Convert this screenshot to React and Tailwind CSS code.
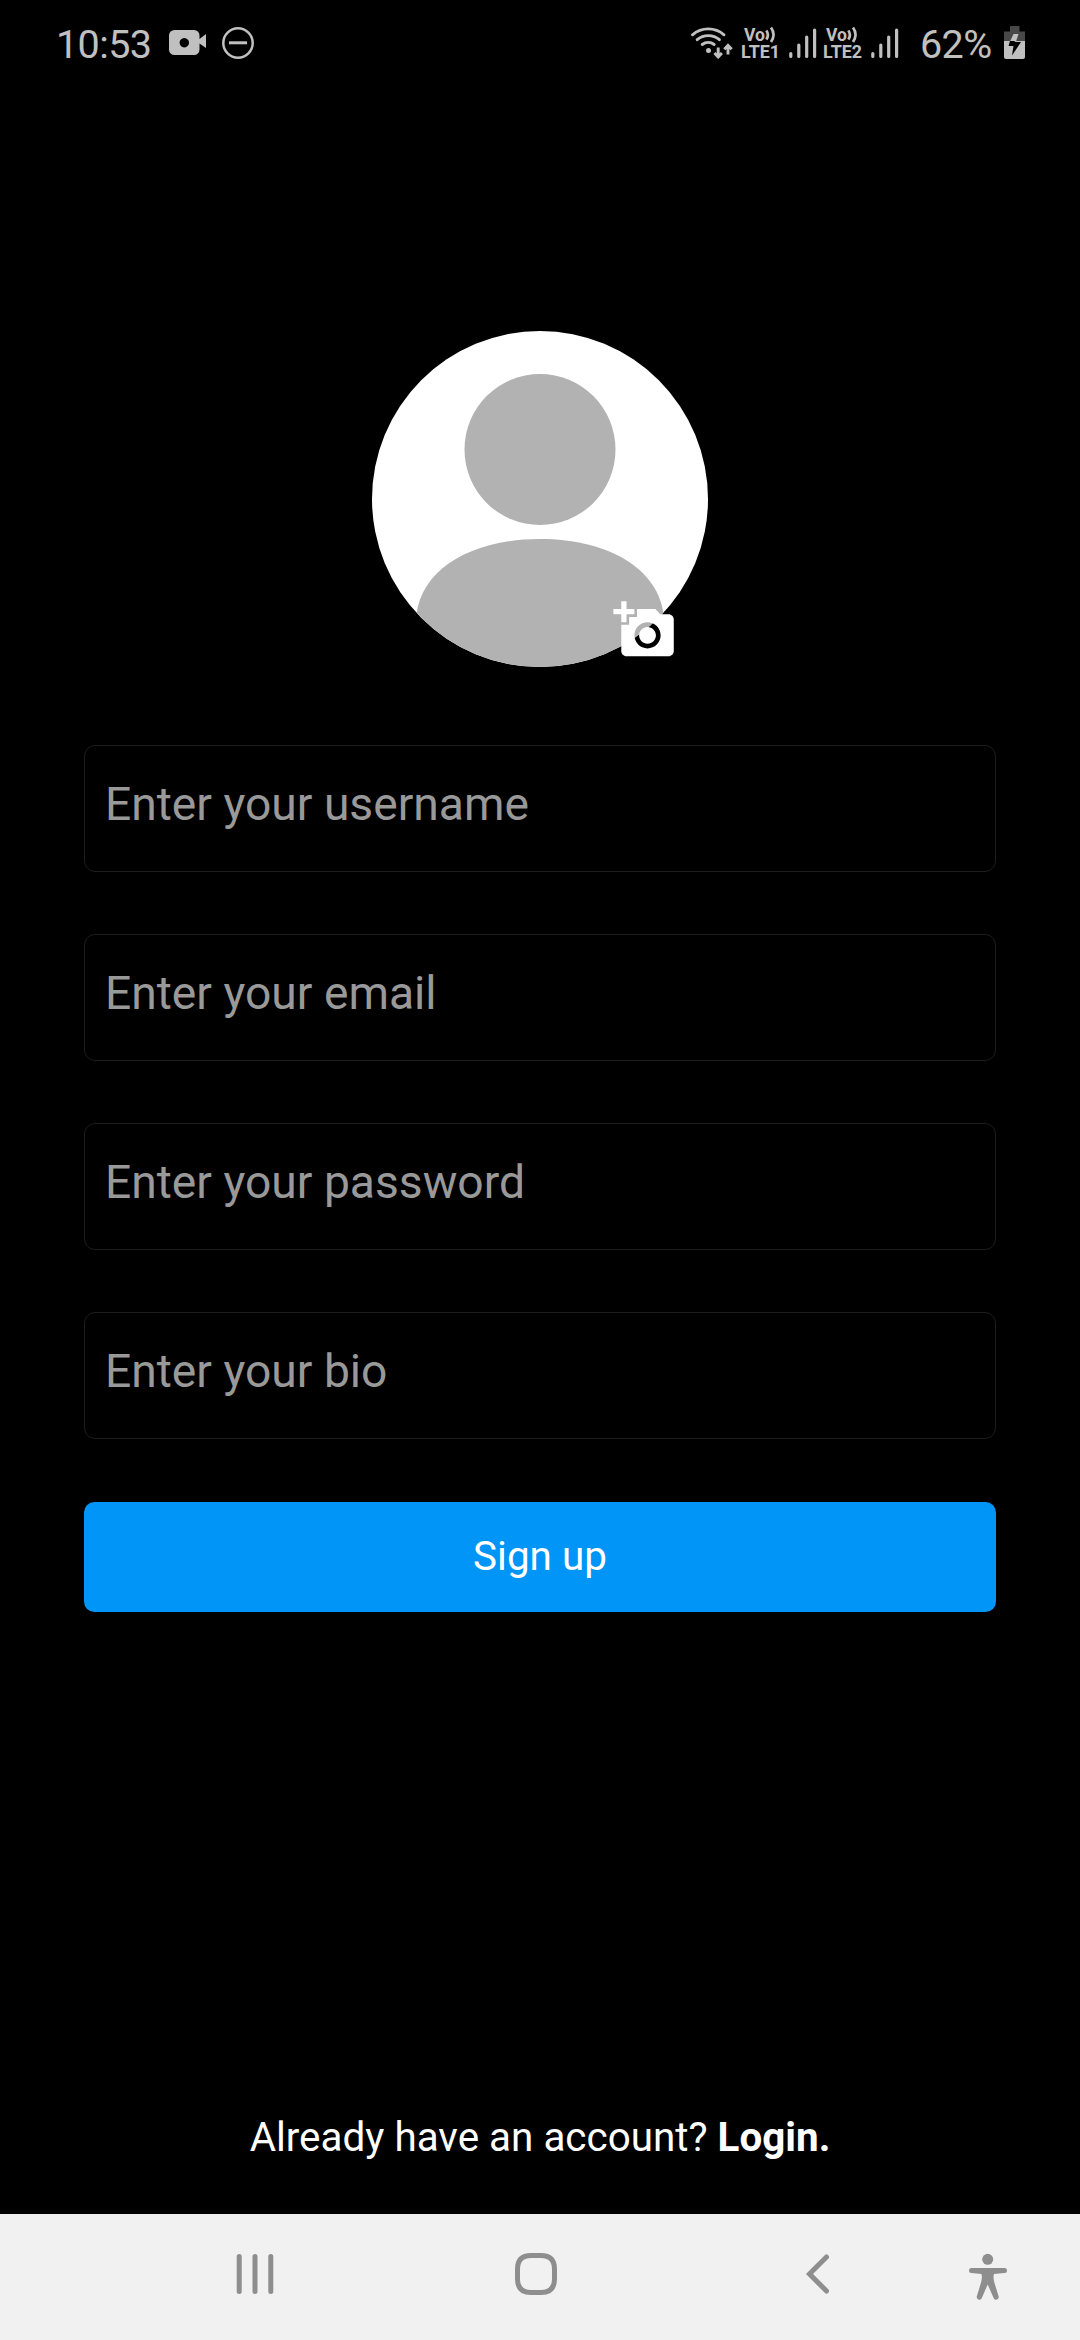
const fields = [
  "Enter your username",
  "Enter your email",
  "Enter your password",
  "Enter your bio",
];

function VideoIcon() {
  return (
    <svg className="ml-[18px] h-[32px] w-[38px]" viewBox="0 0 38 32" fill="#c0c0c0">
      <path fillRule="evenodd" d="M5.5 3h19.5a5.5 5.5 0 0 1 5.5 5.5v3.5l6.5-5v14l-6.5-4.5v6a5.500 5.500 0 0 1-5.500 5.500h-19.500a5.500 5.500 0 0 1-5.500-5.500v-14a5.500 5.500 0 0 1 5.500-5.500zM15.300 11a4.700 4.700 0 1 0 .01 0z" />
    </svg>
  );
}

function DoNotDisturbIcon() {
  return (
    <svg className="ml-[15px] h-[32px] w-[32px]" viewBox="0 0 32 32" fill="none" stroke="#c0c0c0">
      <circle cx="16" cy="16" r="14.700" strokeWidth="2.500" />
      <path d="M7 15.800h18" strokeWidth="3" />
    </svg>
  );
}

function WifiIcon() {
  return (
    <svg className="h-[32px] w-[43px]" viewBox="0 0 43 32" fill="none" stroke="#c0c0c0" strokeWidth="2.900" strokeLinecap="round">
      <path d="M2.500 7.800A24 24 0 0 1 34 7.800" />
      <path d="M7.200 12.700A17 17 0 0 1 29.400 12.700" />
      <path d="M12.200 17.500A10 10 0 0 1 24.200 17.500" />
      <circle cx="18.500" cy="23.500" r="2.500" fill="#c0c0c0" stroke="none" />
      <path d="M28.200 20.500V29.500M24.500 26l3.700 4 3.700-4M38 27.500V18.500M34.300 22.300l3.700-4 3.700 4" strokeLinecap="butt" />
    </svg>
  );
}

function VolteIcon({ label }) {
  return (
    <svg className="h-[44px] w-[46px]" viewBox="-2 -5 46 44" fill="#c0c0c0">
      <g className="font-['Roboto'] text-[18px] font-bold">
        <text x="3" y="14.800" textLength="21" lengthAdjust="spacingAndGlyphs">Vo</text>
        <text x="0" y="32" textLength="39" lengthAdjust="spacingAndGlyphs">{label}</text>
      </g>
      <path d="M25.300 4.500q3.200 4.500 0 9M30 1.500q5 7 0 14.500" fill="none" stroke="#c0c0c0" strokeWidth="2.700" />
    </svg>
  );
}

function SignalIcon() {
  return (
    <svg className="h-[32px] w-[28px]" viewBox="0 0 28 32" stroke="#c0c0c0" strokeWidth="3.200" strokeLinecap="round">
      <path d="M1.800 26.500v3M9.800 18v11.500M17.700 10v19.500M25.600 3v26.500" />
    </svg>
  );
}

function BatteryIcon() {
  return (
    <svg className="ml-[12px] h-[34px] w-[22px]" viewBox="0 0 22 34">
      <path d="M6 0h9.500v5.500h5.500v10H0v-10h6z" fill="#484848" />
      <path d="M0 15h21v16a2 2 0 0 1-2 2H2a2 2 0 0 1-2-2z" fill="#c0c0c0" />
      <path d="M9.500 8h5l-2.500 7.500H6z" fill="#c0c0c0" />
      <path d="M6 15h4.500-.3l1.300 1H17L8 29.500l1.500-9.500H4.500z" fill="#000" />
    </svg>
  );
}

function StatusBar() {
  return (
    <header className="flex h-[86px] shrink-0 items-center pl-[56px] pr-[54px] text-[39.500px] leading-none text-[#c0c0c0]">
      <span className="w-[95px] whitespace-nowrap pt-[3px] tracking-[-0.600px]">10:53</span>
      <VideoIcon />
      <DoNotDisturbIcon />
      <div className="ml-auto flex items-center">
        <WifiIcon />
        <div className="ml-[6px] flex items-center gap-[4px]">
          <VolteIcon label="LTE1" />
          <SignalIcon />
        </div>
        <div className="ml-[4px] flex items-center gap-[4px]">
          <VolteIcon label="LTE2" />
          <SignalIcon />
        </div>
        <span className="ml-[21px] w-[72px] whitespace-nowrap pt-[3px] tracking-[-0.600px]">62%</span>
        <BatteryIcon />
      </div>
    </header>
  );
}

function Avatar() {
  return (
    <div className="relative mt-[245px] h-[336px] w-[336px] self-center">
      <div className="h-full w-full overflow-hidden rounded-full bg-white">
        <svg className="h-full w-full" viewBox="0 0 336 336" fill="#b2b2b2">
          <circle cx="168" cy="118.500" r="75.500" />
          <path d="M44 292C44 240 98 208 168 208S292 240 292 292V336H44z" />
        </svg>
      </div>
      <button className="absolute left-[241px] top-[267px] h-[63px] w-[63px]" aria-label="Add photo">
        <svg className="h-full w-full" viewBox="-0.15 -0.2 24 24" fill="#fff">
          <path d="M3 4V1h2v3h3v2H5v3H3V6H0V4h3zm3 6V7h3V4h7l1.830 2H21c1.100 0 2 .9 2 2v12c0 1.100-.9 2-2 2H5c-1.100 0-2-.9-2-2V10h3zm7 9c2.760 0 5-2.240 5-5s-2.240-5-5-5-5 2.240-5 5 2.240 5 5 5zm-3.200-5c0 1.770 1.430 3.200 3.200 3.200s3.200-1.430 3.200-3.200-1.430-3.200-3.200-3.200-3.200 1.430-3.200 3.200z" />
        </svg>
      </button>
    </div>
  );
}

function NavigationBar() {
  return (
    <nav className="flex h-[126px] shrink-0 items-center bg-[#f1f1f1]">
      <svg className="ml-[236px] mt-[-6px] h-[42px] w-[38px]" viewBox="0 0 38 42" fill="none" stroke="#8e8e8e" strokeWidth="5" strokeLinecap="round">
        <path d="M3.200 3.500v35M19 3.500v35M34.800 3.500v35" />
      </svg>
      <svg className="ml-[241px] mt-[-6px] h-[42px] w-[42px]" viewBox="0 0 42 42" fill="none" stroke="#8e8e8e" strokeWidth="5">
        <path d="M16 2.500h10c9 0 13.500 4.500 13.500 13.500v10c0 9-4.500 13.500-13.500 13.500h-10c-9 0-13.500-4.500-13.500-13.500v-10c0-9 4.500-13.500 13.500-13.500z" />
      </svg>
      <svg className="ml-[248px] mt-[-6px] h-[42px] w-[26px]" viewBox="0 0 26 42" fill="none" stroke="#8e8e8e" strokeWidth="5" strokeLinecap="round">
        <path d="M21.500 4L4.500 21l17 17" />
      </svg>
      <svg className="ml-[137px] h-[48px] w-[40px]" viewBox="0 0 40 48" fill="#8e8e8e">
        <circle cx="19.700" cy="6.300" r="5.500" />
        <path d="M3.500 15h33a2.500 2.500 0 0 1 0 5l-10.500 1c-.8 2.500-.5 5 .2 8l4.300 14a2.600 2.600 0 0 1-5 1.800L19.700 31.500l-5.800 13.300a2.600 2.600 0 0 1-5-1.800l4.300-14c.7-3 1-5.500.2-8l-9.900-1a2.500 2.500 0 0 1 0-5z" />
      </svg>
    </nav>
  );
}

export default function App() {
  return (
    <div className="flex h-[2340px] w-[1080px] flex-col overflow-hidden bg-black font-['Roboto',sans-serif]">
      <StatusBar />
      <main className="flex flex-1 flex-col px-[84px]">
        <Avatar />
        <form className="mt-[78px] flex flex-col gap-[62px]">
          {fields.map((label) => (
            <input
              key={label}
              type="text"
              aria-label={label}
              placeholder={label}
              className="h-[127px] w-full rounded-[11px] border border-[#1c1c1c] bg-black pb-[10px] pl-[20px] text-[46.200px] text-white outline-none placeholder:text-[#999999] placeholder:opacity-100"
            />
          ))}
          <button type="button" className="mt-px h-[110px] rounded-[10.500px] bg-[#0095f6] text-[40.400px] leading-none text-white">
            Sign up
          </button>
        </form>
        <p className="mb-[52px] mt-auto self-center whitespace-nowrap text-[40.400px] leading-[48px] text-white">
          Already have an account? <a className="font-bold">Login.</a>
        </p>
      </main>
      <NavigationBar />
    </div>
  );
}
